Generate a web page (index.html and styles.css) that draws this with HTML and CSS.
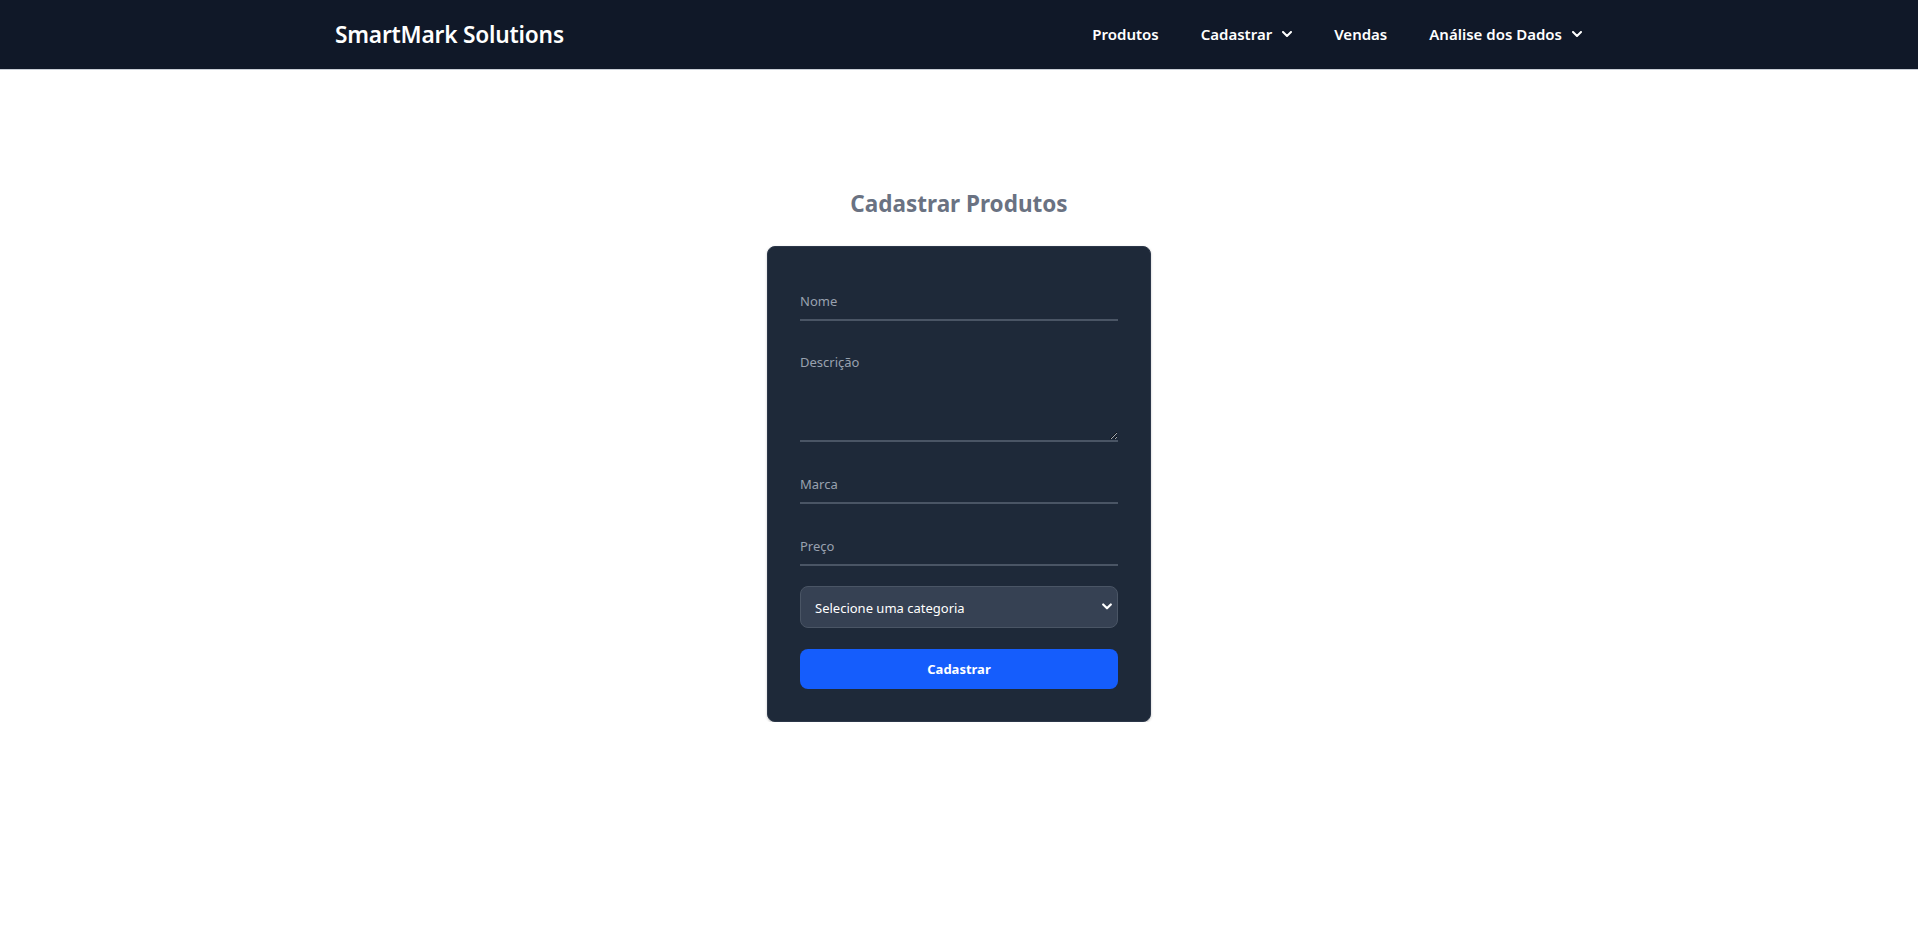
FILE: index.html
```html
<!DOCTYPE html>
<html lang="pt-BR">
<head>
<meta charset="utf-8">
<title>SmartMark Solutions</title>
<link rel="stylesheet" href="styles.css">
</head>
<body>
<nav class="navbar">
  <div class="nav-inner">
    <a class="brand" href="#">SmartMark Solutions</a>
    <ul class="menu">
      <li><a href="#" class="menu-link">Produtos</a></li>
      <li><a href="#" class="menu-link">Cadastrar
        <svg class="chev" viewBox="0 0 10 6" width="10" height="6"><path d="M1 1l4 4 4-4" fill="none" stroke="currentColor" stroke-width="2" stroke-linecap="round" stroke-linejoin="round"/></svg></a></li>
      <li><a href="#" class="menu-link">Vendas</a></li>
      <li><a href="#" class="menu-link">Análise dos Dados
        <svg class="chev" viewBox="0 0 10 6" width="10" height="6"><path d="M1 1l4 4 4-4" fill="none" stroke="currentColor" stroke-width="2" stroke-linecap="round" stroke-linejoin="round"/></svg></a></li>
    </ul>
  </div>
</nav>
<main class="main">
  <h1 class="page-title">Cadastrar Produtos</h1>
  <form class="card">
    <div class="field"><input class="line-input" type="text" placeholder="Nome"></div>
    <div class="field"><textarea class="line-input area" placeholder="Descrição"></textarea></div>
    <div class="field"><input class="line-input" type="text" placeholder="Marca"></div>
    <div class="field"><input class="line-input" type="text" placeholder="Preço"></div>
    <div class="field select-wrap">
      <select class="select">
        <option>Selecione uma categoria</option>
      </select>
      <svg class="select-chev" viewBox="0 0 10 7" width="10" height="7"><path d="M1.2 1.5l3.8 3.8 3.8-3.8" fill="none" stroke="#fff" stroke-width="2.2" stroke-linecap="round" stroke-linejoin="round"/></svg>
    </div>
    <button type="button" class="btn">Cadastrar</button>
  </form>
</main>
</body>
</html>
```
FILE: styles.css
```css
* { box-sizing: border-box; }
html, body { margin: 0; padding: 0; background: #ffffff; }
body {
  font-family: "Segoe UI", "Noto Sans", "Open Sans", sans-serif;
  color: #101828;
}
.navbar {
  background: #101828;
  height: 70px;
  border-bottom: 1px solid #c9ced6;
}
.nav-inner {
  max-width: 1280px;
  margin: 0 auto;
  padding: 0 17px 1px 16px;
  height: 69px;
  display: flex;
  align-items: center;
  justify-content: space-between;
}
.brand {
  color: #ffffff;
  text-decoration: none;
  font-size: 22.7px;
  font-weight: 600;
  letter-spacing: -0.2px;
}
.menu {
  list-style: none;
  margin: 0;
  padding: 0;
  display: flex;
  align-items: center;
  gap: 42px;
}
.menu-link {
  color: #ffffff;
  text-decoration: none;
  font-size: 15px;
  font-weight: 600;
  display: flex;
  align-items: center;
  gap: 10px;
}
.chev { display: block; }
.main {
  display: flex;
  flex-direction: column;
  align-items: center;
  padding-top: 118px;
}
.page-title {
  margin: 0 0 26px;
  font-size: 22.5px;
  line-height: 32px;
  font-weight: 700;
  color: #6a7282;
}
.card {
  width: 384px;
  background: #1e2939;
  border: 1px solid #2c3749;
  border-radius: 8px;
  padding: 32px;
  box-shadow: 0 1px 3px rgba(0,0,0,0.15), 0 1px 2px rgba(0,0,0,0.1);
}
.field { margin-bottom: 20px; }
.line-input {
  display: block;
  width: 100%;
  height: 42px;
  padding: 12px 0 8px;
  background: transparent;
  border: 0;
  border-bottom: 2px solid #4a5565;
  color: #ffffff;
  font-family: inherit;
  font-size: 13px;
  line-height: 20px;
  outline: none;
}
.line-input::placeholder { color: #99a1af; }
.area { height: 101px; resize: vertical; padding-top: 11px; }
.select-wrap { position: relative; margin-bottom: 21px; }
.select {
  display: block;
  width: 100%;
  height: 42px;
  padding: 1px 14px 0;
  background: #364153;
  border: 1px solid #4a5565;
  border-radius: 8px;
  color: #ffffff;
  font-family: inherit;
  font-size: 13px;
  appearance: none;
  -webkit-appearance: none;
  outline: none;
}
.select-chev {
  position: absolute;
  right: 6px;
  top: 17px;
  pointer-events: none;
}
.btn {
  display: block;
  width: 100%;
  height: 40px;
  background: #155dfc;
  border: 0;
  border-radius: 8px;
  color: #ffffff;
  font-family: inherit;
  font-size: 13px;
  font-weight: 700;
  cursor: pointer;
}
```
